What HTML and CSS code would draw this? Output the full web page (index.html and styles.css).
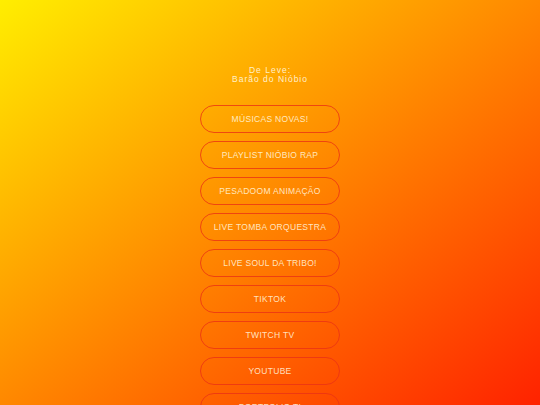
FILE: index.html
```html
<!DOCTYPE html>
<html lang="pt-BR">

<head>
  <meta charset="UTF-8">
  <meta name="viewport" content="width=device-width, initial-scale=1.0">
  <title>De Leve</title>

  <link rel="stylesheet" href="styles.css">

</head>

<body>

  <div id="links">
    <header class="profile">
      <p class="name">De Leve:</p>
      <p class="name">Barão do Nióbio</p>
    </header>

    <nav class="list">
      <a class="link" href="#">Músicas novas!</a>
      <a class="link" href="#">Playlist Nióbio Rap</a>
      <a class="link" href="#">Pesadoom Animação</a>
      <a class="link" href="#">Live Tomba Orquestra</a>
      <a class="link" href="#">Live Soul da Tribo!</a>
      <a class="link" href="#">TikTok</a>
      <a class="link" href="#">Twitch TV</a>
      <a class="link" href="#">YouTube</a>
      <a class="link" href="#">Portfolio TI</a>
    </nav>
  </div>

</body>

</html>
```

FILE: styles.css
```css
* {
  margin: 0;
  padding: 0;
  box-sizing: border-box;
}

body {
  min-height: 100vh;
  background: linear-gradient(to bottom right, #ffee00, #ff2200) fixed;
  font-family: "Liberation Sans", Arial, sans-serif;
  color: rgba(255, 255, 240, 0.85);
}

#links {
  width: 140px;
  margin: 0 auto;
  padding-top: 66px;
  display: flex;
  flex-direction: column;
  align-items: center;
}

.profile {
  text-align: center;
  margin-bottom: 21px;
}

.name {
  font-size: 8.5px;
  line-height: 9px;
  letter-spacing: 1px;
}

.list {
  width: 100%;
  display: flex;
  flex-direction: column;
  gap: 8px;
}

.link {
  display: flex;
  align-items: center;
  justify-content: center;
  height: 28px;
  border: 1.5px solid rgba(235, 50, 20, 0.8);
  border-radius: 14px;
  font-size: 8.5px;
  letter-spacing: 0.3px;
  text-transform: uppercase;
  text-decoration: none;
  color: rgba(255, 250, 225, 0.85);
}
```
